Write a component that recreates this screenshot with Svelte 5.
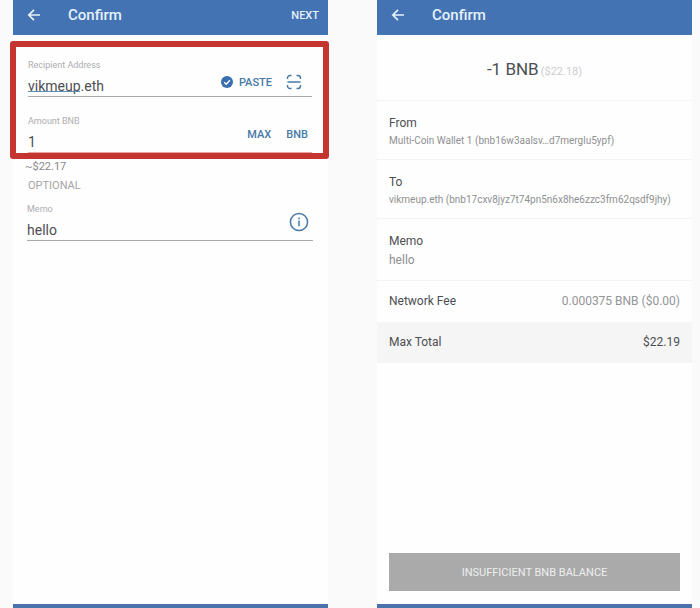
<script>
	let recipient = 'vikmeup.eth';
	let amount = '1';
	let memo = 'hello';

	const details = [
		{ title: 'From', value: 'Multi-Coin Wallet 1 (bnb16w3aalsv…d7merglu5ypf)' },
		{ title: 'To', value: 'vikmeup.eth (bnb17cxv8jyz7t74pn5n6x8he6zzc3fm62qsdf9jhy)' },
		{ title: 'Memo', value: 'hello', large: true }
	];
</script>

{#snippet backButton()}
	<button class="back" type="button" aria-label="Back">
		<svg viewBox="0 0 14 14" width="14" height="14">
			<path d="M13 7H2M7 1.8 1.8 7 7 12.2" fill="none" stroke="currentColor" stroke-width="1.7" />
		</svg>
	</button>
{/snippet}

<main class="screens">
	<section class="screen">
		<header class="app-bar">
			{@render backButton()}
			<h1>Confirm</h1>
			<button class="next" type="button">NEXT</button>
		</header>

		<form class="form">
			<div class="highlight">
				<div class="field">
					<div class="field-main">
						<label for="recipient">Recipient Address</label>
						<input id="recipient" type="text" spellcheck="false" bind:value={recipient} />
						<span class="composing"></span>
					</div>
					<div class="actions">
						<svg class="verified" viewBox="0 0 12 12" width="12" height="12">
							<circle cx="6" cy="6" r="6" fill="#3a6fae" />
							<path d="m3.2 6.2 2 2 3.7-4" fill="none" stroke="#fff" stroke-width="1.4" />
						</svg>
						<button type="button">PASTE</button>
						<button class="scan" type="button" aria-label="Scan QR code">
							<svg viewBox="0 0 16 16" width="16" height="16">
								<path
									d="M1.5 5V4a2.5 2.5 0 0 1 2.5-2.5H5.5M10.5 1.5H12a2.5 2.5 0 0 1 2.5 2.5v1M14.5 11v1a2.5 2.5 0 0 1-2.5 2.5h-1.5M5.5 14.5H4A2.5 2.5 0 0 1 1.5 12v-1M1.5 8h13"
									fill="none"
									stroke="currentColor"
									stroke-width="1.4"
								/>
							</svg>
						</button>
					</div>
				</div>

				<div class="field amount">
					<div class="field-main">
						<label for="amount">Amount BNB</label>
						<input id="amount" type="text" inputmode="decimal" bind:value={amount} />
					</div>
					<div class="actions tall">
						<button type="button">MAX</button>
						<button class="unit" type="button">BNB</button>
					</div>
				</div>
			</div>

			<p class="estimate">~$22.17</p>
			<p class="optional">OPTIONAL</p>

			<div class="field memo">
				<div class="field-main">
					<label for="memo">Memo</label>
					<input id="memo" type="text" bind:value={memo} />
				</div>
				<div class="actions tall">
					<button class="info" type="button" aria-label="About memo">
						<svg viewBox="0 0 20 20" width="20" height="20">
							<circle cx="10" cy="10" r="8.6" fill="none" stroke="currentColor" stroke-width="1.5" />
							<path d="M10 8.6v5.6M10 5.4v1.8" fill="none" stroke="currentColor" stroke-width="1.5" />
						</svg>
					</button>
				</div>
			</div>
		</form>

		<footer class="nav-bar"></footer>
	</section>

	<section class="screen">
		<header class="app-bar">
			{@render backButton()}
			<h1>Confirm</h1>
		</header>

		<p class="total">-1 BNB<small>($22.18)</small></p>

		{#each details as item}
			<div class="detail">
				<h2>{item.title}</h2>
				<p class:large={item.large}>{item.value}</p>
			</div>
		{/each}

		<div class="row">
			<span>Network Fee</span>
			<span class="fee">0.000375 BNB ($0.00)</span>
		</div>
		<div class="row max">
			<span>Max Total</span>
			<span>$22.19</span>
		</div>

		<button class="submit" type="button" disabled>INSUFFICIENT BNB BALANCE</button>

		<footer class="nav-bar"></footer>
	</section>
</main>

<style>
	:global(body) {
		background: #fafafa;
	}

	.screens {
		display: grid;
		grid-template-columns: 1fr 1fr;
		gap: 49px;
		min-height: 100vh;
		padding: 0 8px 0 13px;
		box-sizing: border-box;
		font-family: Roboto, 'Liberation Sans', sans-serif;
		color: #4c4e52;
	}

	.screen {
		display: flex;
		flex-direction: column;
		min-width: 0;
		background: #fefefe;
	}

	h1,
	h2,
	p {
		margin: 0;
		font-weight: 400;
	}

	button,
	input {
		padding: 0;
		border: none;
		background: none;
		font-family: inherit;
		color: inherit;
	}

	button svg {
		display: block;
	}

	.app-bar {
		display: flex;
		align-items: center;
		height: 35px;
		padding: 0 9px 5px 14px;
		box-sizing: border-box;
		background: #4373b3;
		color: #e6f1fb;
	}

	.app-bar h1 {
		flex: 1;
		margin-left: 27px;
		font-size: 15px;
		font-weight: 500;
	}

	.next {
		font-size: 11px;
		font-weight: 500;
	}

	.form {
		flex: 1;
	}

	/* frame sits slightly wider than the screen */
	.highlight {
		margin: 6px -1px 0 -3px;
		padding: 12px 11px 0 12px;
		border: 6px solid #c5352f;
		border-radius: 3px;
	}

	.field {
		display: flex;
		align-items: flex-end;
		border-bottom: 1px solid #a9a9ab;
	}

	.field-main {
		position: relative;
		flex: 1;
		min-width: 0;
	}

	.field label {
		display: block;
		margin-bottom: 5px;
		font-size: 9px;
		line-height: 12px;
		color: #adadaf;
	}

	.field input {
		display: block;
		width: 100%;
		height: 20px;
		font-size: 14px;
		outline: none;
	}

	.composing {
		position: absolute;
		left: 0;
		bottom: 4px;
		width: 52px;
		height: 1px;
		background: #5b8fb5;
	}

	.amount {
		margin-top: 18px;
		border-bottom-color: #e3a5a3;
	}

	.memo {
		margin: 11px 15px 0 14px;
	}

	.actions {
		display: flex;
		align-items: center;
		height: 28px;
		color: #4679a6;
	}

	.actions.tall {
		height: 36px;
	}

	.actions button {
		font-size: 11px;
		font-weight: 500;
	}

	.verified {
		margin-right: 6px;
	}

	.actions .scan {
		margin: 0 10px 0 14px;
	}

	.actions .unit {
		margin: 0 4px 0 15px;
	}

	.info {
		margin-right: 4px;
	}

	.estimate {
		padding-left: 12px;
		font-size: 11px;
		line-height: 16px;
		color: #88898c;
	}

	.optional {
		margin-top: 5px;
		padding-left: 15px;
		font-size: 11px;
		line-height: 12px;
		color: #a3a4a6;
	}

	.total {
		height: 65px;
		border-bottom: 1px solid #f4f4f4;
		font-size: 17px;
		line-height: 68px;
		text-align: center;
	}

	.total small {
		margin-left: 2px;
		font-size: 11px;
		color: #cdcdcf;
	}

	.detail {
		padding: 13px 12px 10px;
		border-bottom: 1px solid #f4f4f4;
	}

	.detail h2 {
		font-size: 12px;
		line-height: 18px;
	}

	.detail p {
		font-size: 10px;
		line-height: 17px;
		white-space: nowrap;
		color: #8f9092;
	}

	.detail p.large {
		font-size: 12px;
		line-height: 20px;
	}

	.row {
		display: flex;
		justify-content: space-between;
		padding: 0 12px;
		font-size: 12px;
		line-height: 41px;
	}

	.fee {
		color: #949597;
	}

	.max {
		background: #f5f5f5;
	}

	.submit {
		height: 38px;
		margin: auto 12px 13px;
		background: #aaa;
		font-size: 11px;
		color: #eee;
	}

	.nav-bar {
		height: 4px;
		background: #4a72ab;
	}
</style>
